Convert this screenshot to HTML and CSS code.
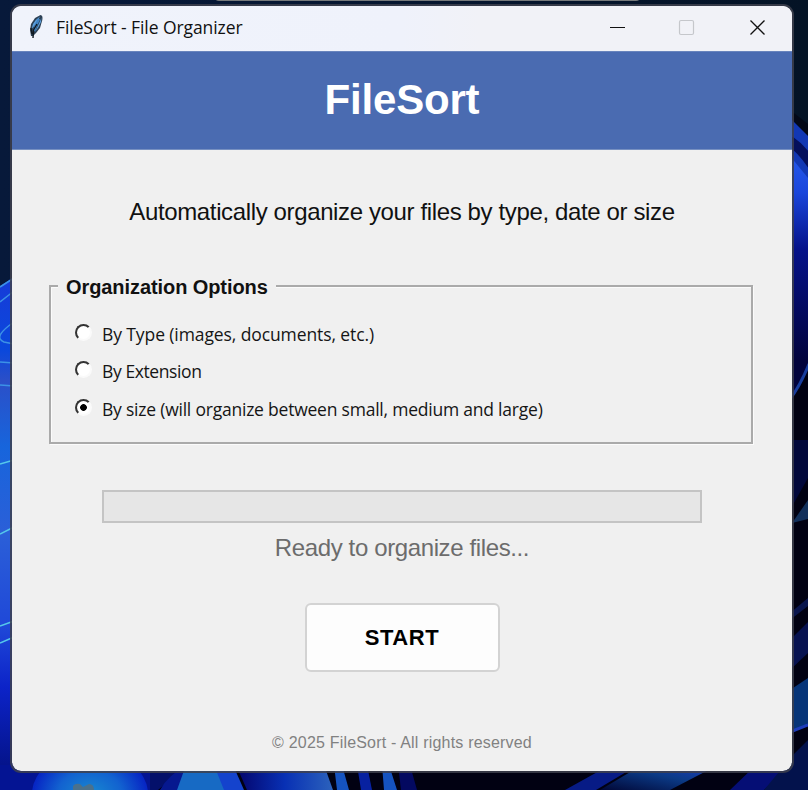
FILE: index.html
```html
<!DOCTYPE html>
<html lang="en">
<head>
<meta charset="utf-8">
<title>FileSort - File Organizer</title>
<link rel="stylesheet" href="styles.css">
</head>
<body>
<svg class="wallpaper" width="808" height="790" viewBox="0 0 808 790" aria-hidden="true">
  <defs>
    <linearGradient id="night" x1="0" y1="0" x2="1" y2="0"><stop offset="0" stop-color="#07193a"/><stop offset="1" stop-color="#041325"/></linearGradient>
    <linearGradient id="left" x1="0" y1="278" x2="0" y2="790" gradientUnits="userSpaceOnUse"><stop offset="0" stop-color="#173bd8"/><stop offset=".14" stop-color="#0a48dc"/><stop offset=".2" stop-color="#2b4fc8"/><stop offset=".33" stop-color="#1765dc"/><stop offset=".5" stop-color="#2b5fd8"/><stop offset=".68" stop-color="#1f48d8"/><stop offset=".8" stop-color="#0c23c8"/><stop offset=".95" stop-color="#05148c"/></linearGradient>
    <linearGradient id="petal" x1="0" y1="140" x2="0" y2="400" gradientUnits="userSpaceOnUse"><stop offset="0" stop-color="#2860f0"/><stop offset=".2" stop-color="#1a46dc"/><stop offset=".42" stop-color="#05128a"/><stop offset=".85" stop-color="#02033c"/></linearGradient>
    <radialGradient id="dome"><stop offset="0" stop-color="#188ad0"/><stop offset=".55" stop-color="#1262d0"/><stop offset="1" stop-color="#0624c4"/></radialGradient>
    <linearGradient id="fold" x1="0" y1="0" x2="1" y2="0"><stop offset="0" stop-color="#04046a"/><stop offset=".5" stop-color="#0830b4"/><stop offset="1" stop-color="#2c62bc"/></linearGradient>
    <linearGradient id="ray" x1="0" y1="1" x2="1" y2="0"><stop offset="0" stop-color="#010736"/><stop offset=".55" stop-color="#0b3a86"/><stop offset="1" stop-color="#1e3cc4"/></linearGradient>
  </defs>
  <path fill="url(#night)" d="M0 0h808v790H0z"/>
  <rect x="214" y="-8" width="427" height="9" rx="5" fill="#777a7b"/>
  <path fill="url(#left)" d="M0 286L14 277V790H0z"/>
  <g fill="none" stroke="#3c92e6" stroke-width="1.5">
    <path d="M0 287L14 278M0 302L14 291M14 322Q-8 337 4 342L14 344M0 362L14 363M0 385L14 386"/>
    <path stroke="#55c8ea" d="M0 464L14 460M0 534L14 527M0 626L14 621M0 643L14 637"/>
  </g>
  <path fill="#010112" d="M130 765h678v25H130z"/>
  <path fill="#04106a" d="M130 765h58L158 790H130z"/>
  <path fill="#041493" d="M0 765h150v25H0z"/>
  <ellipse cx="90" cy="794" rx="58" ry="43" fill="url(#dome)"/>
  <path fill="#06188f" d="M160 790Q168 775 187 765V790z"/>
  <path fill="#176ac4" d="M177 790L186 765H215L225 790z"/>
  <path fill="#1443cd" d="M214 765h19l11 25H224z"/>
  <path fill="url(#fold)" d="M236 765h88l9 25H247z"/>
  <path fill="#1553c0" d="M334 765h8l7 25h-12zM382 765h7l8 25h-13z"/>
  <path fill="#0721a0" d="M357 765h10l5 25h-11z"/>
  <path fill="#030960" d="M398 765h12l7 25h-16z"/>
  <path fill="#071b86" d="M565 790L610 765H638L596 790z"/>
  <path fill="url(#ray)" d="M600 790L642 765H718L670 790z"/>
  <path fill="#050e75" d="M730 790L756 765H790L764 790z"/>
  <path fill="#010112" d="M790 365L808 330V790H790z"/>
  <path fill="#030817" d="M790 110L808 124V160L790 138z"/>
  <path fill="#1238b4" d="M790 118L808 136V182L790 157z"/>
  <path fill="none" stroke="#04105c" stroke-width="10" d="M790 141Q802 149 813 166"/>
  <path fill="url(#petal)" d="M790 156L808 178V366L790 399z"/>
  <path fill="none" stroke="#183d9e" stroke-width="3" d="M790 399Q800 386 809 364"/>
  <path fill="#02083b" d="M790 440H808V478L790 510z"/>
  <path fill="#12305b" d="M792 523L808 500V519z"/>
  <path fill="#09154d" d="M790 613L808 598V606L790 620z"/>
  <path fill="#071250" d="M790 640L808 622V653L790 670z"/>
  <path fill="#063478" d="M790 690L808 678V726L790 732z"/>
  <path stroke="#1d3cbb" stroke-width="3" d="M790 732L808 725"/>
  <path fill="#03124c" d="M794 754L808 740V790H764z"/>
  <path fill="#4a718c" d="M73 790V786Q75 783 80 784L83 787 89 784Q94 784 94 790z"/>
</svg>
<main class="window">
  <header class="titlebar">
    <svg class="feather" width="16" height="26" viewBox="0 0 16 26" aria-hidden="true">
      <path d="M12.5 1Q15.2 1.5 14.3 6L12 14 8 19 5 22H3L2 16 3 10 7 4z" fill="#2c4054"/>
      <path d="M12 2.5Q8 5 5 10L3.5 15 8 10zM13.4 4L7 18 10.5 13 13 8z" fill="#5a9edc"/>
      <path d="M11 5L8 11 6 17" fill="none" stroke="#3f83c4" stroke-width="2.5"/>
      <path d="M9 10L5.5 16 5 24M3 14L4 20" fill="none" stroke="#10181f" stroke-width="1.4"/>
    </svg>
    <span class="caption">FileSort - File Organizer</span>
    <svg class="controls" width="192" height="45" viewBox="600 6 192 45" aria-hidden="true">
      <path d="M610 27.5H625" stroke="#111"/>
      <rect x="679.5" y="20.5" width="14" height="14" rx="1.5" fill="none" stroke="#c5c7cb" stroke-width="1.2"/>
      <path d="M750.5 20.5L764.5 34.5M764.5 20.5L750.5 34.5" stroke="#111" stroke-width="1.3"/>
    </svg>
  </header>
  <div class="banner"><h1>FileSort</h1></div>
  <section class="content">
    <p class="intro">Automatically organize your files by type, date or size</p>
    <fieldset class="options">
      <legend>Organization Options</legend>
      <label class="option"><i class="radio"></i><span class="type">By Type (images, documents, etc.)</span></label>
      <label class="option"><i class="radio"></i><span class="ext">By Extension</span></label>
      <label class="option"><i class="radio selected"></i><span class="size">By size (will organize between small, medium and large)</span></label>
    </fieldset>
    <div class="progress"></div>
    <p class="status">Ready to organize files...</p>
    <button class="start">START</button>
    <footer>© 2025 FileSort - All rights reserved</footer>
  </section>
</main>
</body>
</html>
```
FILE: styles.css
```css
* { box-sizing: border-box; }
body { margin: 0; width: 808px; height: 790px; overflow: hidden; position: relative; font-family: "Liberation Sans", Arial, sans-serif; }
.wallpaper { position: absolute; inset: 0; }
.window { position: relative; width: 784px; height: 769px; margin: 0 0 0 10px; top: 4px; border: 2px solid rgba(62, 65, 78, .85); border-radius: 11px; overflow: hidden; background: #f0f0f0; background-clip: padding-box; }
.titlebar { height: 45px; display: flex; background: linear-gradient(90deg, #f0f3fb, #eff2fb 50%, #f1f2f7 60%); }
.feather { margin: 8px 0 0 16px; }
.caption { margin-left: 12px; line-height: 43px; font-family: "Open Sans", sans-serif; font-size: 17.5px; letter-spacing: -.08px; color: #111; white-space: nowrap; }
.controls { margin-left: auto; }
.banner { height: 99px; background: #4a6bb1; border-top: 1px solid #6884bd; border-bottom: 1px solid #7790c1; display: flex; justify-content: center; }
h1 { margin: 0; font-size: 42px; line-height: 96px; letter-spacing: -.2px; color: #fff; }
.content { display: flex; flex-direction: column; align-items: center; }
p { margin: 0; white-space: nowrap; }
.intro { margin-top: 46px; height: 32px; line-height: 32px; font-size: 24px; letter-spacing: -.37px; color: #111; }
.options { align-self: flex-start; width: 704px; height: 169px; margin: 47px 0 0 37px; padding: 18px 0 0 24px; border: 2px solid #aaa; box-shadow: 1px 1px #fbfbfb, inset 1px 1px #fbfbfb; }
legend { height: 22px; margin-left: -17px; padding: 0 8px; line-height: 24px; font-size: 20px; font-weight: bold; letter-spacing: -.08px; color: #111; white-space: nowrap; background: #f0f0f0; }
.option { height: 37.5px; display: flex; align-items: center; font-family: "Open Sans", sans-serif; font-size: 17.5px; color: #151515; white-space: nowrap; }
.type { letter-spacing: -.1px; }
.ext { letter-spacing: -.4px; }
.size { letter-spacing: -.22px; }
.radio { width: 17px; height: 17px; margin: -3px 10px 0 0; border-radius: 50%; background: #fff; border: 2px solid; border-color: #333 #fafafa #fafafa #333; }
.selected { background: radial-gradient(circle, #000 0 3px, #fff 3.7px); }
.progress { width: 600px; height: 33px; margin: 46px 0 0; border: 2px solid #c4c4c4; background: #e6e6e6; }
.status { height: 30px; margin-top: 10px; line-height: 30px; font-size: 24px; letter-spacing: -.38px; color: #6c6c6c; }
.start { width: 195px; height: 69px; margin-top: 40px; border: 2px solid #d3d3d3; border-radius: 6px; background: #fdfdfd; font: bold 22px "Liberation Sans", sans-serif; letter-spacing: .6px; color: #000; }
footer { height: 22px; margin-top: 60px; line-height: 22px; font-size: 16px; letter-spacing: .19px; color: #818181; white-space: nowrap; }
```
